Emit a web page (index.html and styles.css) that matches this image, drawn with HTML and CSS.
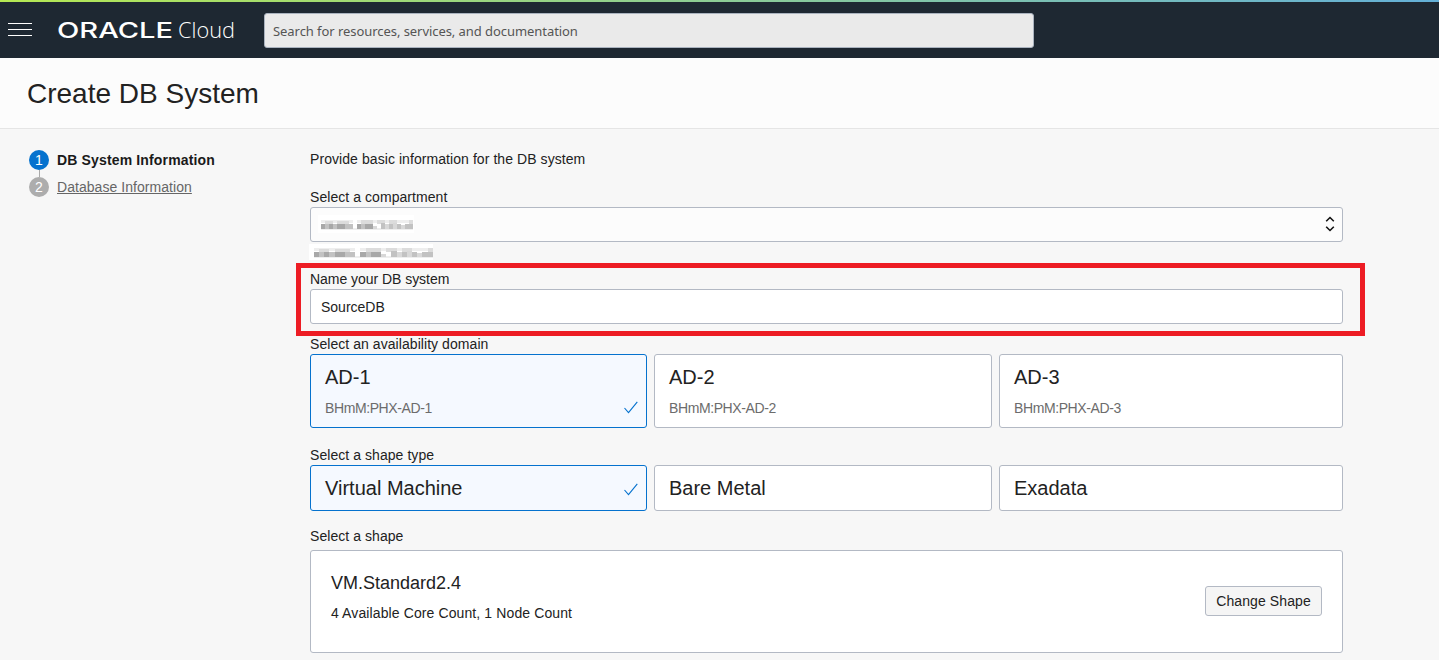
FILE: index.html
```html
<!DOCTYPE html>
<html lang="en">
<head>
<meta charset="utf-8">
<title>Create DB System</title>
<link rel="stylesheet" href="styles.css">
</head>
<body>
<header class="topbar">
  <button class="menu" aria-label="Menu"><span></span><span></span><span></span></button>
  <svg class="logo" width="182" height="34" viewBox="0 0 182 34" role="img" aria-label="Oracle Cloud">
    <text class="logo-brand" x="0" y="25" textLength="116" lengthAdjust="spacingAndGlyphs">ORACLE</text>
    <text class="logo-product" x="121" y="25" textLength="57" lengthAdjust="spacingAndGlyphs">Cloud</text>
  </svg>
  <div class="search">Search for resources, services, and documentation</div>
</header>
<div class="titlebar"><h1>Create DB System</h1></div>
<div class="body">
  <nav class="steps">
    <div class="step active"><span class="num">1</span><b>DB System Information</b></div>
    <div class="step"><span class="num">2</span><a>Database Information</a></div>
  </nav>
  <main class="form">
    <p class="intro">Provide basic information for the DB system</p>
    <label class="label">Select a compartment</label>
    <div class="field select">
      <svg class="redacted" width="96" height="18" viewBox="0 0 96 18"><use href="#mosaic" x="3" y="5"/></svg>
      <svg class="arrows" width="10" height="16" viewBox="0 0 10 16"><path d="M1.2 5.2 5 1.5 8.8 5.2M1.2 10.8 5 14.5 8.8 10.8"/></svg>
    </div>
    <svg class="redacted path" width="124" height="16" viewBox="0 0 124 16"><use href="#mosaic" transform="translate(5 4) scale(1.29 1)"/></svg>
    <section class="highlight">
      <label class="label name">Name your DB system</label>
      <div class="field">SourceDB</div>
    </section>
    <label class="label">Select an availability domain</label>
    <div class="cards domains">
      <div class="card selected"><h2>AD-1</h2><p>BHmM:PHX-AD-1</p><svg class="check" width="14" height="13" viewBox="0 0 14 13"><path d="M.5 7 4.5 11.7 13.3.8"/></svg></div>
      <div class="card"><h2>AD-2</h2><p>BHmM:PHX-AD-2</p></div>
      <div class="card"><h2>AD-3</h2><p>BHmM:PHX-AD-3</p></div>
    </div>
    <label class="label">Select a shape type</label>
    <div class="cards types">
      <div class="card selected"><h2>Virtual Machine</h2><svg class="check" width="14" height="13" viewBox="0 0 14 13"><path d="M.5 7 4.5 11.7 13.3.8"/></svg></div>
      <div class="card"><h2>Bare Metal</h2></div>
      <div class="card"><h2>Exadata</h2></div>
    </div>
    <label class="label">Select a shape</label>
    <div class="shape">
      <div class="shape-text"><h3>VM.Standard2.4</h3><p>4 Available Core Count, 1 Node Count</p></div>
      <button class="change">Change Shape</button>
    </div>
  </main>
</div>
<svg class="defs" width="0" height="0"><defs><g id="mosaic">
  <path fill="#eeeeee" d="M0 0h32v3H0zM36 0h56v3H36zM0 8h92v2H0z"/>
  <path fill="#dcdcdc" d="M4 1h8v3H4zM16 1h12v3H16zM40 0h12v4H40zM56 0h8v4h-8zM68 0h8v4h-8zM88 0h4v4h-4z"/>
  <path fill="#a8a8a8" d="M0 4h4v5H0zM8 4h4v5H8zM16 4h8v5h-8zM36 4h4v5h-4zM44 4h8v5h-8z"/>
  <path fill="#c2c2c2" d="M4 4h4v5H4zM12 4h4v5h-4zM24 4h8v5h-8zM40 4h4v5h-4zM60 3h4v6h-4zM68 4h4v5h-4zM76 4h4v5h-4zM84 4h8v5h-8z"/>
  <path fill="#d8d8d8" d="M52 6h4v3h-4zM64 4h4v5h-4zM72 3h4v6h-4zM80 5h4v4h-4z"/>
</g></defs></svg>
</body>
</html>
```
FILE: styles.css
```css
* { box-sizing: border-box; }
body { margin: 0; height: 660px; overflow: hidden; background: #f7f7f7; color: #222; font: 14px/16px "Liberation Sans", Arial, sans-serif; }
h1, h2, h3, p { margin: 0; font-weight: 400; }
.topbar { height: 58px; padding: 0 8px; display: flex; align-items: center; background: linear-gradient(90deg, #b5e853, #64b0d8) top / 100% 2px no-repeat #1e2832; }
.menu { width: 24px; padding: 0; border: 0; background: none; display: grid; gap: 5px; }
.menu span { height: 1px; background: #fff; }
.logo { margin: 2px 25px 0; fill: #fff; }
.logo-brand { font: 500 21px Inter, sans-serif; }
.logo-product { font: 300 22px "Open Sans", sans-serif; }
.search { width: 770px; height: 35px; margin-top: 3px; padding: 0 8px; border: 1px solid #aab3bf; border-radius: 3px; background: #eaeaea; color: #555; font: 13px/35px "Noto Sans", sans-serif; letter-spacing: -.06px; }
.titlebar { height: 71px; padding: 19px 27px; border-bottom: 1px solid #e5e5e5; background: #fcfcfc; }
h1 { font-size: 28px; line-height: 33px; }
.body { display: flex; }
.steps { width: 310px; padding: 21px 0 0 29px; display: flex; flex-direction: column; gap: 7px; }
.step { height: 20px; display: flex; align-items: center; gap: 8px; color: #666; }
.step a { text-decoration: underline; letter-spacing: .05px; }
.step.active { color: #1a1a1a; }
.step b { letter-spacing: .15px; }
.num { position: relative; width: 20px; height: 20px; border-radius: 50%; background: #adadad; color: #fff; line-height: 20px; text-align: center; }
.active .num { background: #0572ce; }
.active .num::after { content: ""; position: absolute; left: 10px; top: 20px; width: 1px; height: 7px; background: #aaa; }
.form { width: 1033px; padding-top: 22px; }
.intro { margin-bottom: 22px; letter-spacing: .07px; }
.label { display: block; height: 18px; line-height: 16px; letter-spacing: .06px; }
.name { letter-spacing: -.04px; }
.field { height: 35px; padding: 0 10px; border: 1px solid #b3b9c4; border-radius: 3px; background: #fff; line-height: 34px; }
.select { background: #fcfcfc; padding: 0 7px 1px; display: flex; align-items: center; justify-content: space-between; }
.redacted { display: block; background: #fff; shape-rendering: crispEdges; }
.path { margin: 2px 0 3px -1px; }
.arrows { fill: none; stroke: #111; stroke-width: 1.6; }
.highlight { width: 1069px; height: 73px; margin: 0 0 0 -14px; padding: 3px 17px 0 9px; border: 5px solid #ed1c24; }
.cards { display: grid; grid-template-columns: 337px 338px 344px; gap: 7px; }
.card { position: relative; padding: 11px 14px 0; border: 1px solid #b3b9c4; border-radius: 3px; background: #fff; color: #6c6c6c; }
.card h2 { font-size: 20px; line-height: 23px; color: #222; }
.card p { margin-top: 11px; letter-spacing: -.4px; }
.selected { border-color: #0572ce; background: #f5f9ff; }
.check { position: absolute; right: 8px; bottom: 14px; fill: none; stroke: #0572ce; stroke-width: 1.1; }
.domains { height: 74px; margin-bottom: 19px; }
.domains .check { bottom: 13px; }
.types { height: 46px; margin-bottom: 17px; }
.shape { height: 103px; margin-top: 4px; padding: 0 20px 2px; border: 1px solid #b3b9c4; border-radius: 3px; background: #fff; display: flex; justify-content: space-between; align-items: center; }
.shape-text { padding-bottom: 8px; }
.shape h3 { font-size: 18px; line-height: 20px; margin-bottom: 12px; }
.shape p { letter-spacing: .11px; }
.change { width: 117px; height: 30px; padding: 0; border: 1px solid #b3b9c4; border-radius: 3px; background: #f5f5f5; color: #222; font: inherit; letter-spacing: .1px; }
.defs { position: absolute; }
```
